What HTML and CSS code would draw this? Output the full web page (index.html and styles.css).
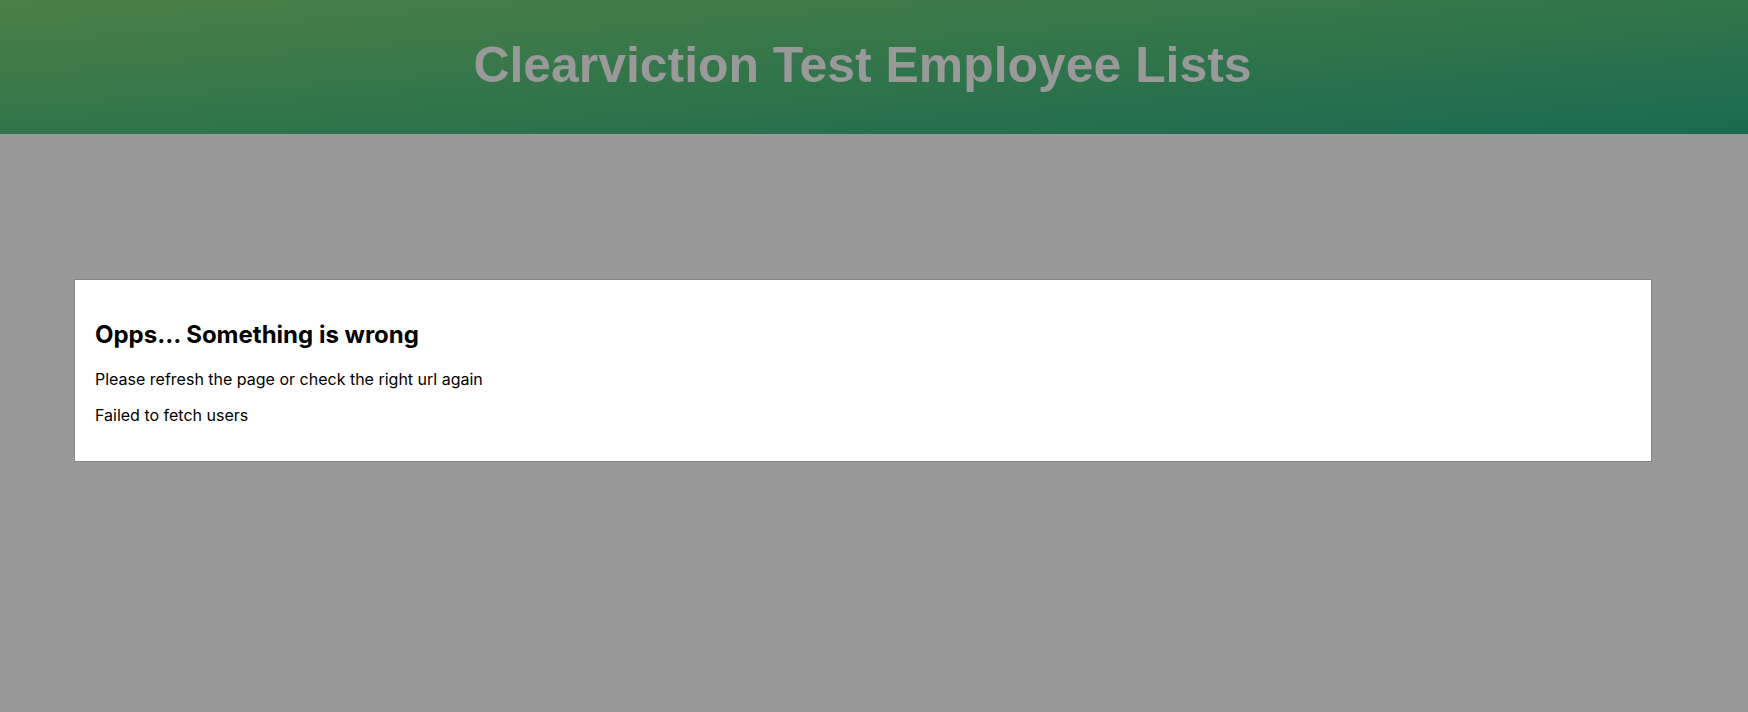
FILE: index.html
```html
<!DOCTYPE html>
<html lang="en">
<head>
<meta charset="utf-8">
<title>Clearviction Test Employee Lists</title>
<link rel="stylesheet" href="styles.css">
</head>
<body>
<header class="site-header">
  <h1 class="site-title">Clearviction Test Employee Lists</h1>
</header>
<main class="content">
  <section class="error-card">
    <h2 class="error-title">Opps... Something is wrong</h2>
    <p class="error-text">Please refresh the page or check the right url again</p>
    <p class="error-text">Failed to fetch users</p>
  </section>
</main>
</body>
</html>
```

FILE: styles.css
```css
html, body {
  margin: 0;
  padding: 0;
}
body {
  background: #999999;
  min-height: 712px;
  font-family: Inter, "Noto Sans", sans-serif;
  color: #000;
}
.site-header {
  height: 134px;
  box-sizing: border-box;
  display: flex;
  align-items: center;
  justify-content: center;
  padding-right: 23px;
  padding-bottom: 5px;
  background: linear-gradient(to bottom right, #4a8045, #1a6a50);
}
.site-title {
  margin: 0;
  font-family: "Liberation Sans", Arial, sans-serif;
  font-weight: bold;
  font-size: 49.9px;
  color: #999999;
}
.content {
  padding: 145px 96px 0 74px;
}
.error-card {
  background: #ffffff;
  border: 1px solid #858585;
  padding: 20px;
}
.error-title {
  margin: 20px 0 20px;
  font-size: 24px;
  font-weight: 700;
}
.error-text {
  margin: 16px 0;
  font-size: 16px;
}
```
